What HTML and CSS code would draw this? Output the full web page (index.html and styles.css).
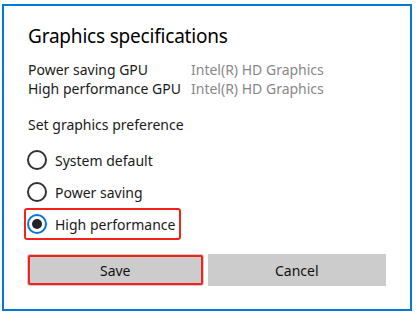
FILE: index.html
```html
<!DOCTYPE html>
<html lang="en">
<head>
    <meta charset="UTF-8">
    <meta name="viewport" content="width=device-width, initial-scale=1.0">
    <title>Graphics specifications</title>
    <link rel="stylesheet" href="styles.css">
</head>
<body>

    <div class="dialog">
        <h2 class="dialog-title">Graphics specifications</h2>

        <!-- GPU info -->
        <div class="spec-list">
            <div class="spec-row">
                <span class="spec-name">Power saving GPU</span>
                <span class="spec-value">Intel(R) HD Graphics</span>
            </div>
            <div class="spec-row">
                <span class="spec-name">High performance GPU</span>
                <span class="spec-value">Intel(R) HD Graphics</span>
            </div>
        </div>

        <p class="pref-label">Set graphics preference</p>

        <!-- Preference options -->
        <div class="radio-group">
            <label class="radio-row">
                <span class="radio-dot"></span>
                <span>System default</span>
            </label>
            <label class="radio-row">
                <span class="radio-dot"></span>
                <span>Power saving</span>
            </label>
            <label class="radio-row marked">
                <span class="radio-dot checked"></span>
                <span>High performance</span>
            </label>
        </div>

        <div class="button-row">
            <button type="button" class="btn marked-btn">Save</button>
            <button type="button" class="btn">Cancel</button>
        </div>
    </div>

</body>
</html>
```

FILE: styles.css
```css
* {
    box-sizing: border-box;
    margin: 0;
    padding: 0;
}

body {
    font-family: "Noto Sans", "Open Sans", Arial, sans-serif;
    background-color: #fff;
    color: #1a1a1a;
}

/* Dialog frame */
.dialog {
    width: 410px;
    margin: 4px 0 0 2px;
    border: 2px solid #0078d7;
    padding: 16px 24px 23px 24px;
}

.dialog-title {
    font-size: 19px;
    font-weight: normal;
    letter-spacing: -0.2px;
    line-height: 28px;
    color: #000;
}

.spec-list {
    margin-top: 10px;
}

.spec-row {
    display: flex;
    font-size: 14px;
    line-height: 19px;
}

.spec-name {
    width: 163px;
}

.spec-value {
    color: #888;
}

.pref-label {
    margin-top: 17px;
    font-size: 14px;
    line-height: 19px;
}

/* Radio buttons */
.radio-group {
    margin-top: 10px;
    margin-left: -4px;
    display: flex;
    flex-direction: column;
    align-items: flex-start;
}

.radio-row {
    display: flex;
    align-items: center;
    gap: 8px;
    height: 32px;
    padding: 0 4px 0 1px;
    border: 2px solid transparent;
    border-radius: 3px;
    font-size: 14px;
}

.radio-row.marked {
    border-color: #f5211b;
}

.radio-dot {
    width: 20px;
    height: 20px;
    border: 2px solid #333;
    border-radius: 50%;
    display: flex;
    align-items: center;
    justify-content: center;
}

.radio-dot.checked {
    border-color: #0078d7;
}

.radio-dot.checked::after {
    content: "";
    width: 10px;
    height: 10px;
    border-radius: 50%;
    background-color: #222;
}

/* Buttons */
.button-row {
    margin-top: 14px;
    margin-left: -1px;
    display: flex;
    gap: 4px;
}

.btn {
    width: 179px;
    height: 32px;
    border: none;
    background-color: #ccc;
    color: #111;
    font-family: inherit;
    font-size: 14px;
}

.marked-btn {
    width: 177px;
    border-radius: 3px;
    outline: 2px solid #f5211b;
    outline-offset: -3px;
}
```
